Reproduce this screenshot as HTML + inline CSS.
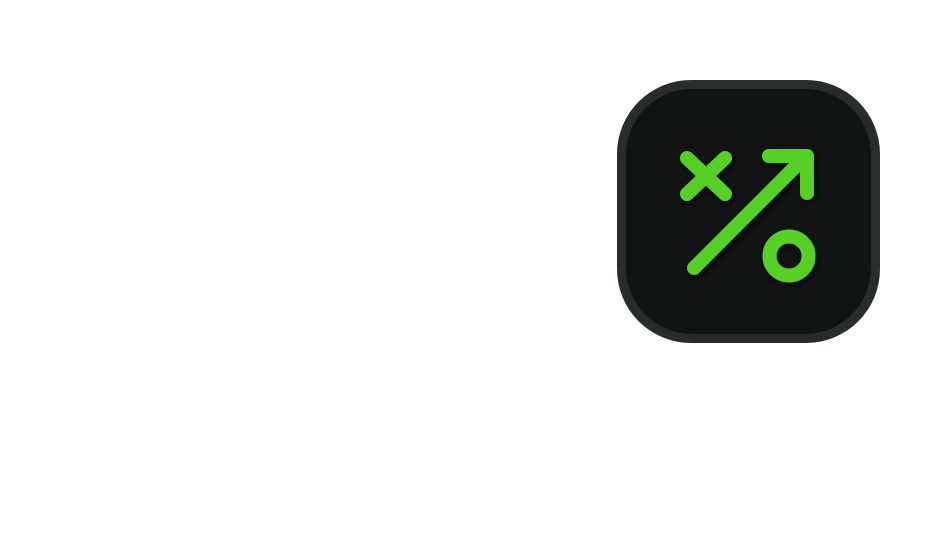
<!DOCTYPE html>
<html><head><style>
html,body{margin:0;padding:0;background:#fff;width:940px;height:560px;overflow:hidden}
.box{position:absolute;left:617px;top:80px;width:263px;height:263px;border-radius:74px;background:#2a2c2b;box-sizing:border-box}
.in{position:absolute;left:9px;top:9px;right:9px;bottom:9px;border-radius:66px;background:#111412}
svg{position:absolute;left:0;top:0}
</style></head><body>
<div class="box"><div class="in"></div></div>
<svg width="940" height="560">
<defs><filter id="s" x="-20%" y="-20%" width="140%" height="140%"><feDropShadow dx="2" dy="3" stdDeviation="3" flood-color="#000" flood-opacity="0.6"/></filter></defs>
<g stroke="#56d026" stroke-width="14" stroke-linecap="round" stroke-linejoin="round" fill="none" filter="url(#s)">
<line x1="687" y1="158" x2="725" y2="194"/>
<line x1="725" y1="158" x2="687" y2="194"/>
<line x1="694" y1="268" x2="802" y2="160"/>
<polyline points="769,156 807,156 807,193"/>
<circle cx="789" cy="256" r="19.5"/>
</g>
</svg>
</body></html>
